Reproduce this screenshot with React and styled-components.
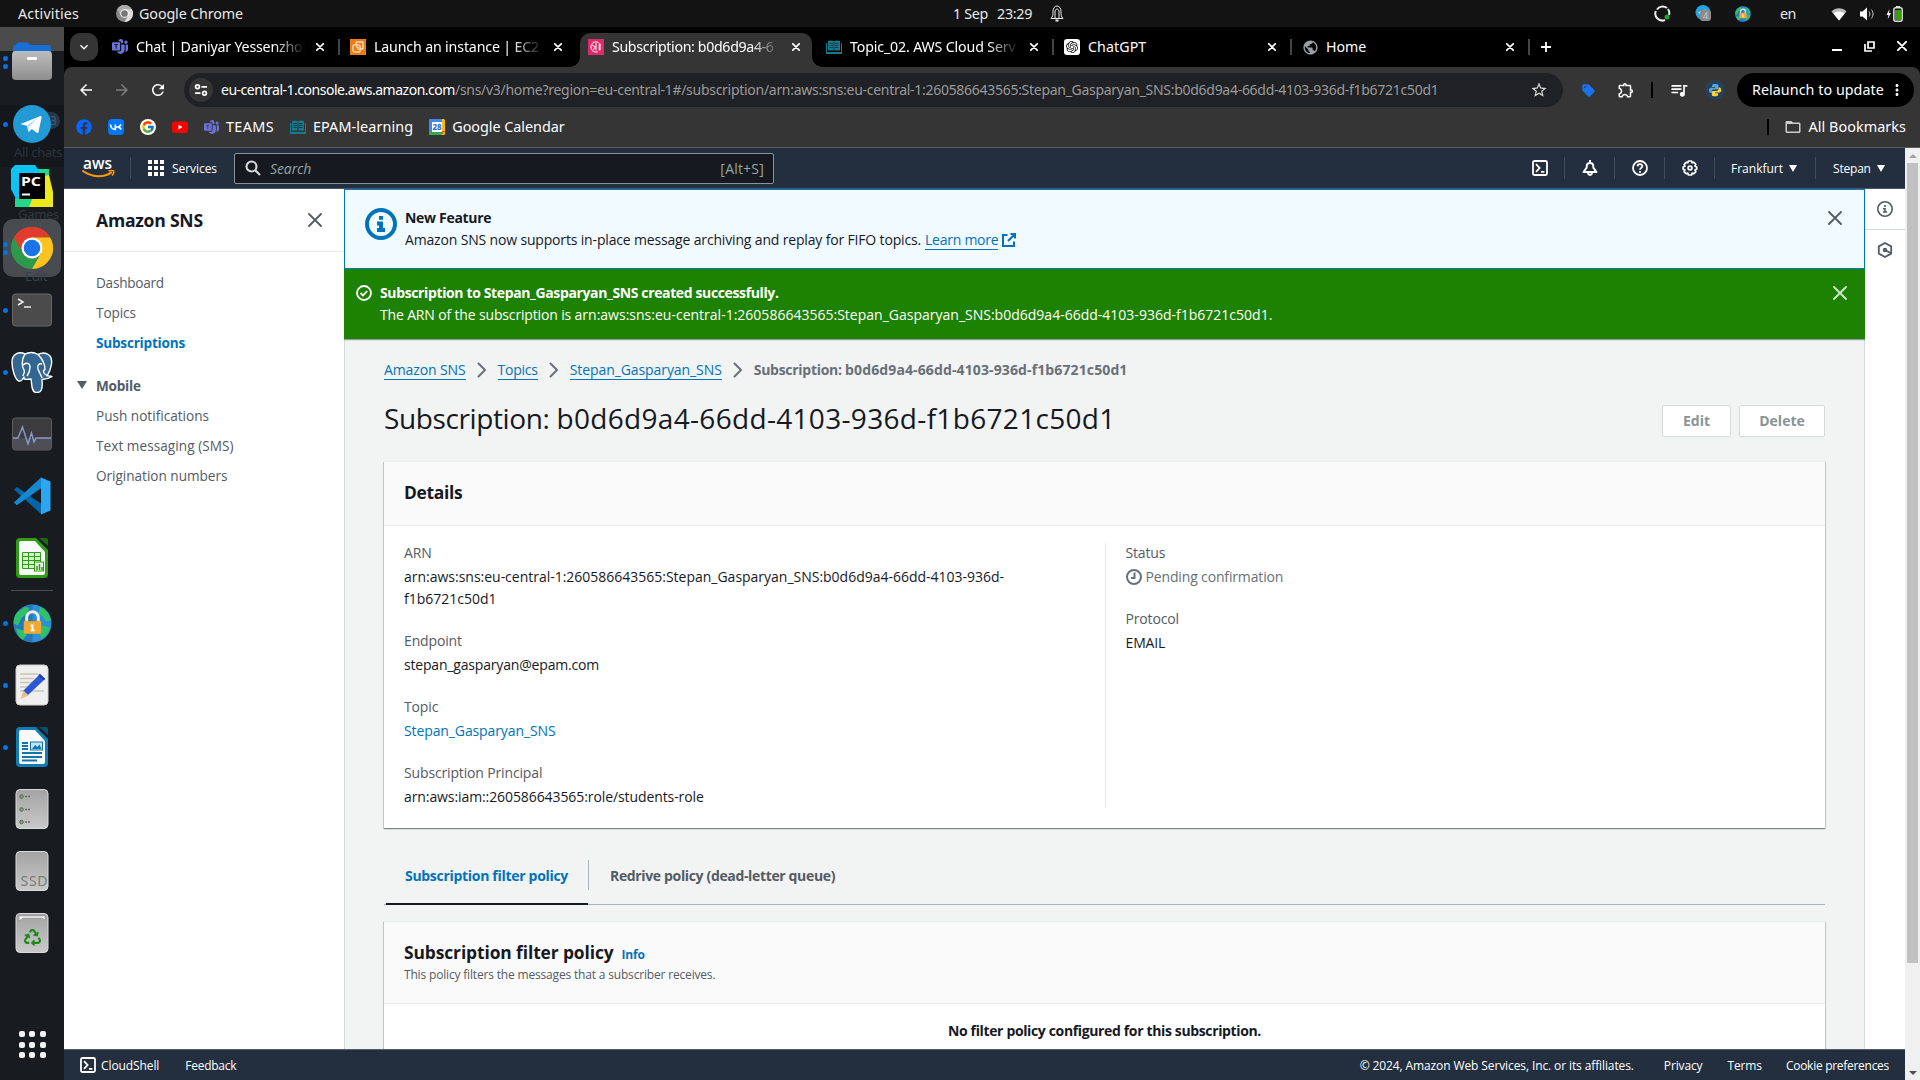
import React from "react";
import styled, { createGlobalStyle, css } from "styled-components";
import { FaRecycle, FaFacebook } from "react-icons/fa";
import { FcGoogle } from "react-icons/fc";
import { SiOpenai } from "react-icons/si";
import { BsMicrosoftTeams } from "react-icons/bs";
import {
  MdArrowBack, MdArrowForward, MdRefresh, MdStarBorder, MdOutlineExtension, MdQueueMusic,
  MdMoreVert, MdFolderOpen, MdPublic, MdSell, MdExpandMore,
} from "react-icons/md";

const Global = createGlobalStyle`
  * { box-sizing: border-box; }
  body { margin: 0; background: #000; overflow: hidden; }
  svg { display: block; flex: none; }
`;

const sysFont = `"Noto Sans", "Open Sans", sans-serif`;
const awsFont = `"Open Sans", "Noto Sans", sans-serif`;

const Desktop = styled.div`
  width: 1920px; height: 1080px; display: flex; flex-direction: column;
  overflow: hidden; font-family: ${sysFont}; background: #181b1f;
`;

/* ---------- generic text ---------- */
const Text = styled.span`
  white-space: nowrap;
  letter-spacing: ${(p) => p.$ls || 0}px;
  ${(p) => p.$size && css`font-size: ${p.$size}px;`}
  ${(p) => p.$color && css`color: ${p.$color};`}
  ${(p) => p.$bold && css`font-weight: 700;`}
`;
const ChromeText = styled(Text)`margin-top: -2px;`;

/* ---------- system bar ---------- */
const SystemBar = styled.header`
  height: 27px; flex: none; background: #131313; color: #e8e8e8; font-size: 14.3px;
  display: grid; grid-template-columns: 1fr auto 1fr; align-items: center;
  padding: 0 16px 0 18px;
`;
const BarGroup = styled.div`
  display: flex; align-items: center;
  ${(p) => p.$end && css`justify-content: flex-end;`}
  ${(p) => p.$shift && css`padding-left: ${p.$shift}px;`}
`;
const Gap = styled.div`width: ${(p) => p.$w}px; flex: none;`;

/* ---------- dock ---------- */
const Workspace = styled.div`flex: 1; display: flex; min-height: 0;`;
const Dock = styled.nav`
  width: 64px; flex: none; display: flex; flex-direction: column; padding-top: 4px;
  background: linear-gradient(#4b4b4b 0 24px, #191d21 24px 78px, #14171b 78px 140px, #181c20 140px);
`;
const DockItem = styled.div`
  height: 62px; width: 64px; flex: none; display: grid; place-items: center; position: relative;
  &::before {
    content: ""; position: absolute; inset: 2px 3px; border-radius: 10px; z-index: 0;
    background: ${(p) => (p.$active ? "#484b4f" : "transparent")};
  }
  & > svg { position: relative; z-index: 1; }
`;
const Dots = styled.div`
  position: absolute; left: 3px; top: 0; bottom: 0; z-index: 2; display: flex; flex-direction: column;
  justify-content: center; gap: 3px;
  & > i { width: 5px; height: 5px; border-radius: 50%; background: #0073e5; }
`;
const Ghost = styled.span`
  position: absolute; left: ${(p) => p.$x}px; bottom: -6px; font-size: 13px; line-height: 18px;
  color: ${(p) => p.$c || "#2a343d"}; white-space: nowrap; z-index: 1; letter-spacing: -0.3px;
`;
const GhostBadge = styled.span`
  position: absolute; left: 42px; top: 19px; width: 18px; height: 17px; border-radius: 9px;
  background: #25384a; color: #4b5c6b; font-size: 12px; line-height: 17px; padding-left: 8px; z-index: 0;
`;
const DockRule = styled.div`width: 42px; height: 1px; background: #4a4d50; margin: 1px auto;`;
const DockSpacer = styled.div`flex: 1;`;
const AppsButton = styled.div`
  display: grid; grid-template-columns: repeat(3, 6px); gap: 4.5px; justify-content: center; padding-bottom: 22px;
  & > i { width: 6px; height: 6px; border-radius: 2px; background: #f3f3f3; }
`;

/* ---------- browser chrome ---------- */
const Browser = styled.main`flex: 1; min-width: 0; display: flex; flex-direction: column; background: #353535;`;
const TabStrip = styled.div`
  height: 40px; flex: none; display: flex; align-items: flex-end; background: #000; color: #fff; padding: 0 13px 0 6px;
`;
const TabSearch = styled.div`
  width: 28px; height: 28px; border-radius: 10px; background: #353535; display: grid; place-items: center; margin: 0 4px 6px 0;
`;
const Tab = styled.div`
  width: 238px; height: 34px; flex: none; display: flex; align-items: center; position: relative;
  padding: 0 0 6px 10px; font-size: 14.2px;
  ${(p) => p.$active && css`
    &::after { content: ""; position: absolute; left: 2px; top: 0; width: 232px; height: 34px; background: #353535; border-radius: 10px 10px 0 0; z-index: 0; }
    &::before { content: ""; position: absolute; left: -8px; bottom: 0; width: 252px; height: 10px; z-index: 0;
      background: radial-gradient(circle at 0 0, transparent 9.5px, #353535 10px) left / 10px 10px no-repeat,
        radial-gradient(circle at 100% 0, transparent 9.5px, #353535 10px) right / 10px 10px no-repeat; }
    & > * { z-index: 1; position: relative; }
  `}
`;
const TabIcon = styled.div`width: 16px; height: 16px; margin-right: 8px; display: grid; place-items: center; flex: none;`;
const TabTitle = styled.div`
  width: 170px; flex: none; overflow: hidden; white-space: nowrap; line-height: 22px; letter-spacing: ${(p) => p.$ls ?? -0.2}px;
  ${(p) => p.$fade && css`mask-image: linear-gradient(90deg, #000 138px, transparent 169px);`}
`;
const TabClose = styled.div`width: 16px; flex: none; margin-left: 6px; display: grid; place-items: center;`;
const TabRule = styled.i`width: 2px; height: 16px; background: #454545; margin-left: 10px; flex: none;`;
const NewTab = styled.div`height: 40px; display: flex; align-items: center; padding: 0 0 1px 11px;`;
const WindowButtons = styled.div`margin-left: auto; height: 40px; display: flex; align-items: center; gap: 22px; padding-bottom: 2px;`;

const ToolbarTop = styled.div`background: #000; flex: none;`;
const ToolbarRow = styled.div`
  height: 46px; display: flex; align-items: center; padding: 0 6px 0 12px; color: #fff; background: #353535;
  border-radius: 8px 8px 0 0;
`;
const NavButton = styled.div`width: 36px; height: 34px; display: flex; align-items: center; padding-left: 1px; color: ${(p) => (p.$off ? "#7d7d7d" : "#fff")};`;
const UrlBar = styled.div`
  width: 1379px; height: 34px; border-radius: 17px; background: #202124; display: flex; align-items: center;
  padding: 0 15px 0 5px; font-size: 14px;
`;
const TuneButton = styled.div`width: 24px; height: 24px; border-radius: 50%; background: #353535; display: grid; place-items: center; margin-right: 8px;`;
const Push = styled.div`margin-left: auto;`;
const BarRule = styled.i`width: 2px; height: 16px; background: #000; flex: none;`;
const Relaunch = styled.div`
  width: 177px; height: 34px; border-radius: 17px; background: #000; display: flex; align-items: center; padding-left: 15px;
  font-size: 14.3px; margin-left: auto;
`;
const BookmarkBar = styled.div`
  height: 34px; flex: none; display: flex; align-items: center; padding: 0 14px 6px 12px; color: #fff; font-size: 14.4px;
`;
const Bookmark = styled.div`display: flex; align-items: center; gap: 7px; margin-right: 16px;`;

/* ---------- page ---------- */
const Page = styled.div`flex: 1; min-height: 0; display: flex; border-top: 1px solid #5c5c5c; font-family: ${awsFont};`;
const PageMain = styled.div`flex: 1; min-width: 0; display: flex; flex-direction: column;`;
const Scrollbar = styled.div`
  width: 15px; flex: none; background: #f0f0f0; display: flex; flex-direction: column; align-items: center; padding: 6px 0 5px;
`;
const Thumb = styled.div`width: 11px; height: 800px; background: #c1c1c1; margin: 5px 0 auto;`;

const AwsHeader = styled.div`
  height: 41px; flex: none; background: #232f3e; border-bottom: 1px solid #4b5665; display: flex; align-items: center;
  padding-left: 18px; color: #fff; font-size: 12px;
`;
const HeaderRule = styled.i`width: 1px; height: 22px; background: #414d5c; flex: none; margin: ${(p) => p.$m || "0"};`;
const HeaderIcon = styled.div`width: 49px; display: grid; place-items: center;`;
const HeaderMenu = styled.div`display: flex; align-items: center; gap: 6px; width: ${(p) => p.$w}px; padding-left: ${(p) => p.$pl}px;`;
const SearchBox = styled.div`
  width: 540px; height: 31px; border: 1px solid #879596; border-radius: 2px; background: #161920; display: flex; align-items: center;
  padding: 0 9px 0 10px; color: #95a5a6; font-size: 14px; margin-left: 17px;
`;
const Caret = styled.i`
  width: 0; height: 0; flex: none; border: ${(p) => p.$s || 4}px solid transparent; color: ${(p) => p.$c || "inherit"};
  ${(p) => (p.$up
    ? css`border-top: 0; border-bottom: ${p.$h || 7}px solid currentColor;`
    : css`border-bottom: 0; border-top: ${p.$h || 7}px solid currentColor;`)}
`;

const PageBody = styled.div`flex: 1; min-height: 0; display: flex; background: #f2f3f3; overflow: hidden;`;
const SideNav = styled.aside`width: 280px; flex: none; background: #fff; color: #545b64; font-size: 13.6px;`;
const SideHead = styled.div`
  height: 63px; border-bottom: 1px solid #eaeded; display: flex; align-items: center; justify-content: space-between;
  padding: 0 22px 0 32px; color: #16191f;
`;
const SideList = styled.ul`list-style: none; margin: 0; padding: ${(p) => p.$pad}; line-height: 30px;`;
const SideGroup = styled.div`
  display: flex; align-items: center; gap: 9px; margin: 16px 0 5px 13px; height: 22px; font-weight: 700; letter-spacing: -0.25px;
`;

const Content = styled.section`flex: 1; min-width: 0; border-right: 1px solid #d5dbdb; border-left: 1px solid #d5dbdb;`;
const InfoFlash = styled.div`
  height: 80px; margin: 0 -1px; border: 1px solid #0073bb; background: #f1faff; display: flex; padding: 17px 22px 0 20px; color: #16191f;
`;
const SuccessFlash = styled.div`
  height: 70px; margin: 0 -1px; background: #1d8102; color: #fff; display: flex; padding: 13px 18px 0 12px;
  box-shadow: 0 1px 1px rgba(0, 28, 36, 0.3), 1px 1px 1px rgba(0, 28, 36, 0.15);
`;
const Slot = styled.div`padding-top: ${(p) => p.$t}px;`;
const Lines = styled.div`display: flex; flex-direction: column; font-size: 14px; line-height: 22px; flex: 1; margin-left: ${(p) => p.$ml}px;`;
const Link = styled(Text)`color: #0073bb; ${(p) => p.$u && css`border-bottom: 1px solid #0073bb; line-height: 18px;`}`;
const Inline = styled.div`display: flex; align-items: ${(p) => p.$align || "center"}; gap: ${(p) => p.$gap || 0}px; ${(p) => p.$h && css`height: ${p.$h}px;`}`;

const Breadcrumbs = styled.div`
  display: flex; align-items: center; height: 20px; margin: 21px 39px 0; font-size: 14px; line-height: 18px; gap: 9px; color: #687078;
`;
const TitleRow = styled.div`display: flex; justify-content: space-between; align-items: center; height: 40px; margin: 18px 39px 0; color: #16191f;`;
const ButtonRow = styled.div`display: flex; gap: 8px; padding-top: 6px;`;
const Button = styled.div`
  height: 32px; width: ${(p) => p.$w}px; background: #fff; border: 1px solid #d5dbdb; border-radius: 2px; color: #879596;
  font-size: 14px; line-height: 30px; font-weight: 700; text-align: center;
`;
const Card = styled.div`
  background: #fff; margin: ${(p) => p.$m}; border-top: 1px solid #eaeded; color: #16191f;
  box-shadow: 0 1px 1px 0 rgba(0, 28, 36, 0.3), 1px 1px 1px 0 rgba(0, 28, 36, 0.15), -1px 1px 1px 0 rgba(0, 28, 36, 0.15);
`;
const CardHead = styled.div`
  height: ${(p) => p.$h}px; background: #fafafa; border-bottom: 1px solid #eaeded; padding: 18px 20px 0; line-height: 24px;
`;
const Desc = styled.div`font-size: 12px; line-height: 18px; color: #545b64; margin-top: 1px; letter-spacing: -0.175px;`;
const Columns = styled.div`display: grid; grid-template-columns: 1fr 1fr; padding: 16px 20px 20px 0; height: 302px;`;
const Column = styled.div`
  display: flex; flex-direction: column; gap: 20px; padding-left: 20px; font-size: 14px; line-height: 22px; height: 266px;
  ${(p) => p.$divider && css`border-left: 1px solid #eaeded; margin-left: 10px;`}
`;
const Field = styled.div`display: flex; flex-direction: column; & > :first-child { color: #545b64; margin-bottom: 2px; }`;
const Tabs = styled.div`height: 45px; margin: 32px 39px 0 39px; border-bottom: 1px solid #aab7b8; display: flex; font-size: 14px; font-weight: 700;`;
const TabLink = styled.div`
  height: 45px; line-height: 32px; padding: 0 20px; color: #545b64; margin-left: 1px;
  ${(p) => p.$on && css`color: #0073bb; border-bottom: 2px solid #16191f; width: 202px; padding: 0 19px; margin-left: 2px; white-space: nowrap;`}
`;
const TabDivider = styled.i`width: 1px; height: 30px; background: #aab7b8;`;
const EmptyRow = styled.div`height: 60px; padding-top: 16px; text-align: center; font-size: 14px; line-height: 22px;`;
const HelpRail = styled.aside`width: 40px; flex: none; background: #fff; color: #545b64; display: flex; flex-direction: column;`;
const RailItem = styled.div`height: ${(p) => p.$h}px; display: grid; place-items: center; ${(p) => p.$line && css`border-bottom: 1px solid #d5dbdb;`}`;
const Footer = styled.footer`
  height: 31px; flex: none; background: #232f3e; border-top: 1px solid #545f6e; color: #fff; font-size: 12px; display: flex; align-items: center;
  padding: 0 16px; justify-content: space-between;
`;

/* ---------- small icons ---------- */
const X = ({ s = 14, w = 2, c = "currentColor" }) => (
  <svg width={s} height={s} viewBox="0 0 14 14" stroke={c} strokeWidth={w} strokeLinecap="round"><path d="M1 1l12 12M13 1L1 13" /></svg>
);
const InfoIcon = ({ s = 32, w = 2, c = "#0073bb" }) => (
  <svg width={s} height={s} viewBox="0 0 16 16" fill="none" stroke={c} strokeWidth={w}>
    <circle cx="8" cy="8" r={8 - w / 2} /><path d="M8 4v1.9M6 7.8h2v3.3M6 11h4" />
  </svg>
);
const CloudShellIcon = () => (
  <svg width="16" height="16" viewBox="0 0 16 16" fill="none" stroke="#fff" strokeWidth="1.8"><rect x="1" y="1" width="14" height="14" rx="1.5" /><path d="M4 4.2L7.6 8 4 11.8M9 11.8h3.4" /></svg>
);
const BellIcon = () => (
  <svg width="16" height="16" viewBox="0 0 16 16" fill="none" stroke="#fff" strokeWidth="1.9" strokeLinejoin="round"><path d="M8 0v2.500M1.500 12L4.700 7.600V6.300C4.700 4.400 6 3 8 3s3.300 1.400 3.300 3.300v1.300l3.200 4.400zM6 12.300c0 3.500 4 3.500 4 0" /></svg>
);
const HelpIcon = () => (
  <svg width="16" height="16" viewBox="0 0 16 16" fill="none" stroke="#fff" strokeWidth="1.8"><circle cx="8" cy="8" r="7" /><path d="M5.6 6.4C5.7 3.4 10.3 3.5 10.3 6.2 10.3 7.9 8 7.9 8 9.8M8 11v1.7" /></svg>
);
const GearIcon = () => (
  <svg width="16" height="16" viewBox="0 0 16 16" fill="none" stroke="#fff" strokeWidth="1.7" strokeLinejoin="round">
    <path d="M6.4 1h3.2l.5 1.7 1.8-.4 1.8 2-.8 1.7 1.8.9v2.3l-1.7.9.8 1.8-2 1.8-1.7-.6-.5 1.9H6.4l-.6-1.9-1.7.6-2-1.8.8-1.8-1.7-.9V6.9L3 6l-.8-1.7 1.9-2 1.7.4z" /><circle cx="8" cy="8" r="1.9" />
  </svg>
);
const Chevron = () => (
  <svg width="14" height="16" viewBox="0 0 14 16" fill="none" stroke="#687078" strokeWidth="2" strokeLinecap="round" strokeLinejoin="round"><path d="M3.500 1.500L10 8l-6.500 6.500" /></svg>
);
const CheckIcon = () => (
  <svg width="16" height="16" viewBox="0 0 16 16" fill="none" stroke="#fff" strokeWidth="1.8"><circle cx="8" cy="8" r="7" /><path d="M4.500 8l2.500 2.400 4.200-4.400" /></svg>
);
const ClockIcon = () => (
  <svg width="16" height="16" viewBox="0 0 16 16" fill="none" stroke="#687078" strokeWidth="2"><circle cx="8" cy="8" r="7" /><path d="M8.500 3.500V9H5" /></svg>
);
const ExternalIcon = () => (
  <svg width="14" height="14" viewBox="0 0 14 14" fill="none" stroke="#0073bb" strokeWidth="2"><path d="M8.500 1H13v4.500M13 1L6 8M5.500 2H1v11h11V8.500" /></svg>
);
const HexIcon = () => (
  <svg width="16" height="16" viewBox="0 0 16 16" fill="none" stroke="#545b64" strokeWidth="1.8" strokeLinejoin="round"><path d="M8 1l6.200 3.400v7.200L8 15l-6.200-3.400V4.400z" /><circle cx="8" cy="8" r="1.300" fill="#545b64" /><path d="M8.500 8.200l5.500 3" /></svg>
);
const SearchIcon = () => (
  <svg width="16" height="16" viewBox="0 0 16 16" fill="none" stroke="#d5dbdb" strokeWidth="2.100"><circle cx="6.500" cy="6.500" r="5" /><path d="M10 10l5 5" /></svg>
);
const GridIcon = () => (
  <svg width="16" height="16" viewBox="0 0 16 16" fill="#fff">
    {[0, 6, 12].flatMap((x) => [0, 6, 12].map((y) => <rect key={`${x}-${y}`} x={x} y={y} width="4" height="4" />))}
  </svg>
);
const TuneIcon = () => (
  <svg width="14" height="14" viewBox="0 0 14 14" fill="none" stroke="#fff" strokeWidth="1.700"><circle cx="3.500" cy="3.800" r="1.900" /><path d="M7.500 3.800H13M1 10.200h5.500" /><circle cx="10.500" cy="10.200" r="1.900" /></svg>
);
const AwsLogo = () => (
  <svg width="34" height="32" viewBox="0 -5 34 32">
    <text x="1" y="12" fontFamily="Open Sans, sans-serif" fontSize="16" fontWeight="600" fill="#fff" textLength="29" lengthAdjust="spacingAndGlyphs">aws</text>
    <path d="M1 14c9 6.600 21 6.600 28 1.600" fill="none" stroke="#f90" strokeWidth="2" strokeLinecap="round" />
    <path d="M26.500 14c2.500-.6 4.700-.5 5.200 0 .3.700-.3 3-1.700 4.600" fill="none" stroke="#f90" strokeWidth="1.500" />
  </svg>
);
const BookIcon = () => (
  <svg width="16" height="16" viewBox="0 0 16 16"><path d="M2 2c2-.8 4-.7 6 .3 2-1 4-1.100 6-.3v9.500H2z" fill="#157a8c" /><path d="M0 13h16v2H0zM0 4h1v9H0zM15 4h1v9h-1z" fill="#157a8c" /><path d="M3.500 4.500h3.500M3.500 6.500h3.500M3.500 8.500h3.500M9 4.500h3.500M9 6.500h3.500M9 8.500h3.500M8 3v9" stroke="#0b3c48" /></svg>
);
const Ec2Icon = () => (
  <svg width="16" height="16" viewBox="0 0 16 16" fill="none" stroke="#fff"><rect width="16" height="16" fill="#ec7d12" stroke="none" /><rect x="3" y="6" width="7" height="7" rx=".5" /><path d="M6 6V3h7v7h-3M6 8h2v3" /></svg>
);
const SnsIcon = () => (
  <svg width="16" height="16" viewBox="0 0 16 16" fill="none" stroke="#fff"><rect width="16" height="16" fill="#e02a6b" stroke="none" /><path d="M10.500 3.500C6 1.500 3 4.500 3 8s3 6 7 4.700M4 6l3.500 2L5 11M8 4v7.500M10.500 6h2.500M10.500 8h2.500M10.500 10h2.500M11.700 4v7.500" /></svg>
);
const VkIcon = () => (
  <svg width="16" height="16" viewBox="0 0 16 16"><rect width="16" height="16" rx="4" fill="#07f" /><path d="M2.500 5.500c.3 3 1.800 5 4.800 5v-5M13 5.500c-.8 1.500-2 2.500-3.200 2.600 1.500.2 2.700 1.200 3.400 2.400M7.600 8h2" fill="none" stroke="#fff" strokeWidth="1.600" /></svg>
);
const YtIcon = () => (
  <svg width="16" height="16" viewBox="0 0 16 16"><rect y="2.500" width="16" height="11.500" rx="3" fill="#f00" /><path d="M6.500 5.800v4.600l4-2.300z" fill="#fff" /></svg>
);
const CalIcon = () => (
  <svg width="16" height="16" viewBox="0 0 16 16"><rect width="16" height="16" rx="1.500" fill="#fbbc04" /><path d="M1.500 0H13v4H0V1.500z" fill="#4285f4" /><path d="M0 3h4v9H0z" fill="#4285f4" /><path d="M0 12h12v4H1.500L0 14.500z" fill="#34a853" /><path d="M12 12h4l-4 4z" fill="#ea4335" /><rect x="3" y="3" width="10" height="10" fill="#fff" /><text x="8" y="11" fontSize="8" fontWeight="700" textAnchor="middle" fill="#1967d2" fontFamily="Noto Sans, sans-serif">28</text></svg>
);
const GoogleDot = () => (
  <svg width="16" height="16" viewBox="0 0 16 16"><circle cx="8" cy="8" r="8" fill="#fff" /><FcGoogle x="1" y="1" size={14} /></svg>
);
const PythonBadge = () => (
  <svg width="20" height="20" viewBox="0 0 20 20"><circle cx="10" cy="10" r="10" fill="#27405a" /><path d="M10 4c-3 0-3 .9-3 3h3.200v.7H6C4.500 7.700 4 9 4 10.300c0 1.500.6 2.600 1.700 2.600h1.200V11c0-1 .8-1.600 1.700-1.600H12c.9 0 1.400-.7 1.400-1.500V5.500C13.400 4.300 12 4 10 4z" fill="#54a3dc" /><path d="M10.200 16.300c3 0 3-.9 3-3H10v-.7h4.200c1.500 0 2-1.300 2-2.600 0-1.500-.6-2.600-1.700-2.600h-1v1.900c0 1-.9 1.600-1.700 1.600H8.300c-.9 0-1.500.7-1.500 1.500v2.300c0 1.300 1.400 1.600 3.400 1.600z" fill="#ffd43b" /></svg>
);

/* ---------- tray icons ---------- */
const Tray = () => (
  <>
    <svg width="17" height="17" viewBox="0 0 17 17" fill="none"><path d="M13 3A7 7 0 0 0 3 4.500M1.800 6A7 7 0 0 0 11 15M15 10a7 7 0 0 0-1-6" stroke="#eee" strokeWidth="2" /><circle cx="13" cy="12" r="2.500" fill="#26a32a" /></svg>
    <Gap $w={24} />
    <svg width="17" height="17" viewBox="0 0 17 17"><circle cx="8" cy="7.500" r="7.500" fill="#2aa1dc" /><path d="M3 7.500l8-3-1.500 7z" fill="#fff" /><rect x="5" y="5" width="11" height="11" rx="3" fill="#8b8b8b" /><text x="10.500" y="14" fontSize="9" textAnchor="middle" fill="#ccc" fontFamily="Noto Sans, sans-serif">4</text></svg>
    <Gap $w={23} />
    <svg width="16" height="16" viewBox="0 0 40 40"><GlobeArt /></svg>
    <Gap $w={29} />
    <Text $ls={-0.4}>en</Text>
    <Gap $w={35} />
    <svg width="16" height="14" viewBox="0 0 16 14"><path d="M8 13.500L.5 4.500C4.500.2 11.500.2 15.500 4.500z" fill="#bbb" /><path d="M8 13.500L2.500 6.500C5.500 3.800 10.500 3.800 13.500 6.500z" fill="#fff" /></svg>
    <Gap $w={12} />
    <svg width="16" height="16" viewBox="0 0 16 16" fill="none"><path d="M1 5.500h2.500L8 1.500v13L3.500 10.500H1z" fill="#fff" /><path d="M10 5.500c1.200 1.500 1.200 3.500 0 5M12.300 3.500c2.300 2.800 2.300 6.200 0 9" stroke="#ccc" /></svg>
    <Gap $w={11} />
    <svg width="18" height="18" viewBox="0 0 18 18"><path d="M3.500 4L.5 10h2l-.7 4L5 8H3z" fill="#fff" /><rect x="7.800" y="2.800" width="8.400" height="13.400" rx="2" fill="none" stroke="#ddd" strokeWidth="1.500" /><path d="M10 1h4v1.500h-4z" fill="#ddd" /><rect x="9" y="5" width="6" height="10" fill="#3f9a0a" /></svg>
  </>
);

/* ---------- dock art ---------- */
function GlobeArt() {
  return (
    <>
      <circle cx="20" cy="20" r="19.500" fill="#2f8fd6" />
      <path d="M20 .5A19.500 19.500 0 0 0 20 39.500z" fill="#2678bd" />
      <path d="M4 9l8-6 5 1-3 6-5 4-4 8-4-2c-.5-4 .5-8 3-11zM3 25l8 2 3 5-4 5c-4-3-6-7-7-12zM28 3c6 2 10 8 11 14l-5 1-4-6-4-2zM30 22l8 2c-1 5-4 9-9 12l-2-6z" fill="#2fc06a" />
      <path d="M14 19v-5a6 6 0 0 1 12 0v5" fill="none" stroke="#e9edf0" strokeWidth="3" />
      <rect x="11" y="17.500" width="18" height="13" rx="1.500" fill="#f0a830" />
      <path d="M18 21h3v5h1v2h-4v-2h1v-3h-1z" fill="#fff" />
    </>
  );
}
const FilesArt = () => (
  <svg width="40" height="40" viewBox="0 0 40 40"><defs><linearGradient id="fg" x1="0" y1="0" x2="0" y2="1"><stop offset="0" stopColor="#bdbdbd" /><stop offset="1" stopColor="#8e8e8e" /></linearGradient></defs>
    <path d="M4 3a2.500 2.500 0 0 1 2.500-2.500h9L18 3h18a3 3 0 0 1 3 3v10H1V6a3 3 0 0 1 3-3z" fill="#1a6fd6" /><rect y="9" width="40" height="29" rx="4" fill="url(#fg)" /><rect x="15" y="15" width="10" height="3" rx="1" fill="#fff" /></svg>
);
const TelegramArt = () => (
  <svg width="38" height="38" viewBox="0 0 38 38"><circle cx="19" cy="19" r="19" fill="#229ad6" /><path d="M7.500 19L27 11.200c1-.4 1.700.2 1.500 1.500L25.500 27c-.3 1-1 1.200-1.800.7l-4.900-3.600-2.500 2.500c-.6.5-1 .2-1.100-.5l-1.300-5.400-5.700-1.500c-.8-.2-.8-.6-.7-.2z" fill="#fff" /><path d="M14 20l11-6.800-8.700 8.300-.7 4.300z" fill="#bcdcf0" /></svg>
);
const PycharmArt = () => (
  <svg width="42" height="42" viewBox="0 0 42 42"><path d="M4 34l20-30 14 0v18L26 42H4z" fill="#21d789" /><path d="M30 12l8-2 4 17v15H18z" fill="#eeea1a" /><path d="M0 4l4-4h20l5 7-20 27H5L0 24z" fill="#0cc3f4" /><rect x="8" y="8" width="26" height="26" fill="#000" /><text x="10" y="21" fontSize="13" fontWeight="700" fill="#fff" fontFamily="Noto Sans, sans-serif" textLength="20" lengthAdjust="spacingAndGlyphs">PC</text><path d="M11 29.500h8" stroke="#fff" strokeWidth="2" /></svg>
);
const ChromeArt = ({ s = 42, mono }) => {
  const [r, y, g, b] = mono ? ["#aaa", "#ddd", "#888", "#777"] : ["#e33b2e", "#fcc31e", "#2d9a4b", "#1a73e8"];
  return (
    <svg width={s} height={s} viewBox="0 0 42 42"><circle cx="21" cy="21" r="21" fill={g} />
      <path d="M2.800 10.500A21 21 0 0 1 39.200 10.500L21 10.500 11.900 26.200z" fill={r} />
      <path d="M39.200 10.500A21 21 0 0 1 21 42L30 26.200 21 10.500z" fill={y} />
      <circle cx="21" cy="21" r="10.500" fill="#fff" /><circle cx="21" cy="21" r="8.300" fill={b} /></svg>
  );
};
const TerminalArt = () => (
  <svg width="40" height="34" viewBox="0 0 40 34"><rect x=".5" y="1" width="39" height="32" rx="3" fill="#4b4b4b" stroke="#666" /><path d="M6 6l5 3-5 3M12 14h7" fill="none" stroke="#eee" strokeWidth="1.500" /></svg>
);
const PostgresArt = () => (
  <svg width="42" height="42" viewBox="0 0 42 42" fill="#336791" stroke="#fff" strokeWidth="1.400" strokeLinejoin="round">
    <path d="M14 3C8 0 1 3 1 11c0 7 3 18 7 19 2 .5 4-2 5-4 0 2-1 3 7 2 1 4 0 13 5 13.500 5 .5 7-3 6-13 4 0 7-1 10-3-1-.8-3-.5-5-.6C40 19 43 8 38 4c-4-3-9-1.500-11-.5C23 1 18 1 14 3z" />
    <path d="M14 3c-4 6-3 13-1 16 1.500 3-1 4-1 6M27 3.500c5 5 7 11 7 15-2 1-3 3 2 6M12 14c3-3 7-2 7 2 0 5-1 6-3 9M31 13c-3-1-5 1-4 5 1 3 3 6 4 9" fill="none" />
  </svg>
);
const MonitorArt = () => (
  <svg width="40" height="34" viewBox="0 0 40 34"><rect x=".5" y="1" width="39" height="32" rx="3" fill="#3c3c3f" stroke="#5d5d60" /><path d="M1 21h38v9a3 3 0 0 1-3 3H4a3 3 0 0 1-3-3z" fill="#4d4e56" /><path d="M1 21h5l4.500-11L16 27l3.500-11 2.500 9 2-4h15" fill="none" stroke="#8a9ad0" strokeWidth="1.400" /></svg>
);
const VscodeArt = () => (
  <svg width="38" height="38" viewBox="0 0 38 38"><path d="M1 12.500L4 10l26 18-2 9z" fill="#0065a9" /><path d="M1 25.500L4 28 30 10 28 1z" fill="#007acc" /><path d="M28 .5l9.500 4v29L28 37.500z" fill="#2da6f0" /><path d="M28 .5v10L4 28l-3-2.500z" fill="#1787cf" /></svg>
);
const DocArt = ({ kind }) => {
  const c = kind === "calc" ? "#2e9c15" : "#0f7cb5";
  const d = kind === "calc" ? "#1c6a0d" : "#0b4f74";
  return (
    <svg width="34" height="42" viewBox="0 0 34 42"><rect x="1" y="1" width="32" height="40" rx="4" fill={c} /><path d="M20 0h13v13z" fill="#181c20" /><path d="M24 1h7a2 2 0 0 1 2 2v6z" fill={d} /><path d="M4 6a2 2 0 0 1 2-2h14l10 11v21a2 2 0 0 1-2 2H6a2 2 0 0 1-2-2z" fill="#fafafa" />
      {kind === "calc" ? (
        <><path d="M7.500 15.500h18v16h-18zM7.500 19.500h18M7.500 23.500h18M7.500 27.500h18M13.500 15.500v16M19.500 15.500v16" fill="#d7f0cf" stroke={c} /><rect x="19.500" y="25" width="9" height="9" fill="#eaf8e4" stroke={c} /><path d="M22 33v-4M24.500 33v-6M27 33v-3" stroke={c} strokeWidth="1.500" /></>
      ) : (
        <><path d="M7 17h6M7 20h6M7 23h6M7 27h20M7 31h20M7 34.500h15" stroke="#1276ad" strokeWidth="1.800" /><rect x="15.500" y="16" width="12" height="8" fill="#bfe3f6" stroke="#1276ad" /><path d="M17 23l3-4 2.500 2 2-2.500 2 4.500z" fill="#1276ad" /></>
      )}
    </svg>
  );
};
const EditorArt = () => (
  <svg width="34" height="42" viewBox="0 0 34 42"><rect x="1" y="1" width="32" height="40" rx="4" fill="#efefef" stroke="#cfcfcf" /><path d="M5 10h18M5 14.500h14M5 18.500h14M5 23h8M5 27h24" stroke="#c9c6b5" strokeWidth="1.500" /><path d="M22 13l3-3 5 5-17 16-5-4z" fill="#2c58d8" /><path d="M8.500 26.500l5 5-8 3.500z" fill="#f0b98c" /><path d="M24 10.500l5.500 5" stroke="#1c3da8" strokeWidth="2" /></svg>
);
const DriveArt = ({ kind }) => (
  <svg width="34" height="42" viewBox="0 0 34 42"><defs><linearGradient id={`dg-${kind}`} x1="0" y1="0" x2="0" y2="1"><stop offset="0" stopColor="#a3a3a3" /><stop offset="1" stopColor="#c9c9c9" /></linearGradient></defs>
    <rect x="1" y="1.500" width="32" height="39" rx="4" fill={`url(#dg-${kind})`} stroke="#d9d9d9" />
    {kind === "disk" && [8.500, 21.500, 34].map((y) => <g key={y}><circle cx="6.500" cy={y} r="1.800" fill="#78a84c" stroke="#666" /><path d={`M10 ${y}h2M13 ${y}h2`} stroke="#666" strokeWidth="1.500" /></g>)}
    {kind === "ssd" && <text x="5.500" y="36" fontSize="14" fill="#7c7c7c" fontFamily="Noto Sans, sans-serif" textLength="27">SSD</text>}
    {kind === "trash" && <><path d="M4 4h26v4l-3-2H8L4 9z" fill="#fff" stroke="#888" strokeWidth=".6" /><FaRecycle x="9" y="17" size={17} color="#1f8a1a" /></>}
  </svg>
);

const dockTop = [
  { id: "files", art: <FilesArt />, dots: 2 },
  { id: "telegram", art: <TelegramArt />, dots: 1, extra: <><GhostBadge>3</GhostBadge><Ghost $x={14}>All chats</Ghost></> },
  { id: "pycharm", art: <PycharmArt />, dots: 0, extra: <Ghost $x={18} $c="#30383f">Games</Ghost> },
  { id: "chrome", art: <ChromeArt />, dots: 2, active: true, extra: <Ghost $x={25} $c="#3a4148">Edit</Ghost> },
  { id: "terminal", art: <TerminalArt />, dots: 1 },
  { id: "postgres", art: <PostgresArt />, dots: 1 },
  { id: "monitor", art: <MonitorArt />, dots: 0 },
  { id: "vscode", art: <VscodeArt />, dots: 0 },
  { id: "calc", art: <DocArt kind="calc" />, dots: 0 },
];
const dockBottom = [
  { id: "vpn", art: <svg width="39" height="39" viewBox="0 0 40 40"><GlobeArt /></svg>, dots: 1 },
  { id: "editor", art: <EditorArt />, dots: 1 },
  { id: "writer", art: <DocArt kind="writer" />, dots: 1 },
  { id: "disk", art: <DriveArt kind="disk" />, dots: 0 },
  { id: "ssd", art: <DriveArt kind="ssd" />, dots: 0 },
  { id: "trash", art: <DriveArt kind="trash" />, dots: 0 },
];
const renderDock = ({ id, art, dots, active, extra }) => (
  <DockItem key={id} $active={active}>
    {art}{extra}
    <Dots>{Array.from({ length: dots }, (_, i) => <i key={i} />)}</Dots>
  </DockItem>
);

const tabs = [
  { title: "Chat | Daniyar Yessenzhol", icon: <BsMicrosoftTeams size={16} color="#6a74d8" />, rule: true, fade: true },
  { title: "Launch an instance | EC2", icon: <Ec2Icon />, fade: true, ls: -0.15 },
  { title: "Subscription: b0d6d9a4-6", icon: <SnsIcon />, active: true, fade: true, ls: -0.35 },
  { title: "Topic_02. AWS Cloud Serv", icon: <BookIcon />, rule: true, fade: true, ls: -0.15 },
  { title: "ChatGPT", icon: <svg width="16" height="16" viewBox="0 0 16 16"><rect width="16" height="16" rx="3" fill="#fff" /><SiOpenai x="2" y="2" size={12} color="#111" /></svg>, rule: true, ls: 0.1 },
  { title: "Home", icon: <MdPublic size={17} color="#9aa0a6" />, rule: true, ls: 0 },
];

const Fields = ({ items }) => items.map(([label, value]) => <Field key={label}><Text $ls={-0.15}>{label}</Text>{value}</Field>);

export default function App() {
  return (
    <Desktop>
      <Global />
      <SystemBar>
        <BarGroup>
          <Text $ls={0.15}>Activities</Text><Gap $w={37} /><ChromeArt s={17} mono /><Gap $w={6} /><Text $ls={-0.12}>Google Chrome</Text>
        </BarGroup>
        <BarGroup $shift={95}>
          <Text $ls={-0.3}>1 Sep</Text><Gap $w={9} /><Text $ls={-0.3}>23:29</Text><Gap $w={18} />
          <svg width="14" height="17" viewBox="0 0 14 17" fill="none" stroke="#eee"><path d="M1 13.500c2-2 2-4 2-7C3 3.500 4.500 1 7 1s4 2.500 4 5.500c0 3 0 5 2 7zM5 13.500V7c0-4 4-4 4 0v6.500" /><path d="M5.500 15.500h3" strokeWidth="2" /></svg>
        </BarGroup>
        <BarGroup $end><Tray /></BarGroup>
      </SystemBar>
      <Workspace>
        <Dock>
          {dockTop.map(renderDock)}
          <DockRule />
          {dockBottom.map(renderDock)}
          <DockSpacer />
          <AppsButton>{Array.from({ length: 9 }, (_, i) => <i key={i} />)}</AppsButton>
        </Dock>
        <Browser>
          <TabStrip>
            <TabSearch><MdExpandMore size={16} /></TabSearch>
            {tabs.map((t) => (
              <Tab key={t.title} $active={t.active}>
                <TabIcon>{t.icon}</TabIcon>
                <TabTitle $fade={t.fade} $ls={t.ls}>{t.title}</TabTitle>
                <TabClose><X s={8} w={2.800} /></TabClose>
                {t.rule && <TabRule />}
              </Tab>
            ))}
            <NewTab><svg width="10" height="10" viewBox="0 0 10 10" stroke="#fff" strokeWidth="1.800"><path d="M5 0v10M0 5h10" /></svg></NewTab>
            <WindowButtons>
              <svg width="10" height="12" viewBox="0 0 10 12"><path d="M0 9h10v2H0z" fill="#fff" /></svg>
              <svg width="11" height="11" viewBox="0 0 11 11" fill="none" stroke="#fff" strokeWidth="1.700"><path d="M4 1h6v6H4zM1 3v7h7" /></svg>
              <X s={10} w={2.600} />
            </WindowButtons>
          </TabStrip>
          <ToolbarTop>
            <ToolbarRow>
              <NavButton><MdArrowBack size={18} /></NavButton>
              <NavButton $off><MdArrowForward size={18} /></NavButton>
              <NavButton><MdRefresh size={18} /></NavButton>
              <UrlBar>
                <TuneButton><TuneIcon /></TuneButton>
                <ChromeText $ls={-0.48} $color="#fff">eu-central-1.console.aws.amazon.com</ChromeText>
                <ChromeText $ls={-0.285} $color="#9a9a9a">/sns/v3/home?region=eu-central-1#/subscription/arn:aws:sns:eu-central-1:260586643565:Stepan_Gasparyan_SNS:b0d6d9a4-66dd-4103-936d-f1b6721c50d1</ChromeText>
                <Push><MdStarBorder size={18} color="#ddd" /></Push>
              </UrlBar>
              <Gap $w={18} /><MdSell size={15} color="#1a73e8" />
              <Gap $w={21} /><MdOutlineExtension size={18} />
              <Gap $w={16} /><BarRule />
              <Gap $w={16} /><MdQueueMusic size={20} />
              <Gap $w={16} /><PythonBadge />
              <Relaunch><ChromeText $ls={0.05}>Relaunch to update</ChromeText><Gap $w={4} /><MdMoreVert size={18} /></Relaunch>
            </ToolbarRow>
          </ToolbarTop>
          <BookmarkBar>
            <Bookmark><FaFacebook size={16} color="#0866ff" /></Bookmark>
            <Bookmark><VkIcon /></Bookmark>
            <Bookmark><GoogleDot /></Bookmark>
            <Bookmark><YtIcon /></Bookmark>
            <Bookmark><BsMicrosoftTeams size={15} color="#6a74d8" /><ChromeText $ls={0.35}>TEAMS</ChromeText></Bookmark>
            <Bookmark><BookIcon /><ChromeText $ls={0.1}>EPAM-learning</ChromeText></Bookmark>
            <Bookmark><CalIcon /><ChromeText $ls={-0.05}>Google Calendar</ChromeText></Bookmark>
            <Push />
            <BarRule /><Gap $w={15} /><MdFolderOpen size={18} color="#ccc" /><Gap $w={6} /><ChromeText $ls={0.05}>All Bookmarks</ChromeText>
          </BookmarkBar>
          <Page>
            <PageMain>
              <AwsHeader>
                <AwsLogo /><HeaderRule $m="0 17px 0 14px" /><GridIcon /><Gap $w={8} /><Text $ls={-0.06}>Services</Text>
                <SearchBox><SearchIcon /><Gap $w={9} /><Text as="i" $ls={-0.1}>Search</Text><Push /><Text $ls={0.2}>[Alt+S]</Text></SearchBox>
                <Push />
                <HeaderIcon><CloudShellIcon /></HeaderIcon><HeaderRule />
                <HeaderIcon><BellIcon /></HeaderIcon><HeaderRule />
                <HeaderIcon><HelpIcon /></HeaderIcon><HeaderRule />
                <HeaderIcon><GearIcon /></HeaderIcon><HeaderRule />
                <HeaderMenu $w={100} $pl={16}><Text>Frankfurt</Text><Caret /></HeaderMenu><HeaderRule />
                <HeaderMenu $w={89} $pl={17}><Text $ls={-0.2}>Stepan</Text><Caret /></HeaderMenu>
              </AwsHeader>
              <PageBody>
                <SideNav>
                  <SideHead><Text $bold $size={17.600} $ls={-0.25}>Amazon SNS</Text><X w={1.800} c="#545b64" /></SideHead>
                  <SideList $pad="16px 0 0 32px">
                    <li><Text $ls={-0.25}>Dashboard</Text></li>
                    <li><Text $ls={-0.1}>Topics</Text></li>
                    <li><Link $bold $ls={-0.22}>Subscriptions</Link></li>
                  </SideList>
                  <SideGroup><Caret $s={5} $h={8} />Mobile</SideGroup>
                  <SideList $pad="0 0 0 32px">
                    <li><Text $ls={0}>Push notifications</Text></li>
                    <li><Text $ls={0.05}>Text messaging (SMS)</Text></li>
                    <li><Text $ls={-0.02}>Origination numbers</Text></li>
                  </SideList>
                </SideNav>
                <Content>
                  <InfoFlash>
                    <Slot $t={1}><InfoIcon /></Slot>
                    <Lines $ml={8}>
                      <Text $bold $ls={-0.3}>New Feature</Text>
                      <Inline $gap={4} $h={22}><Text $ls={-0.163}>Amazon SNS now supports in-place message archiving and replay for FIFO topics.</Text><Link $u $ls={-0.25}>Learn more</Link><ExternalIcon /></Inline>
                    </Lines>
                    <Slot $t={4}><X w={1.800} c="#545b64" /></Slot>
                  </InfoFlash>
                  <SuccessFlash>
                    <Slot $t={3}><CheckIcon /></Slot>
                    <Lines $ml={8}>
                      <Text $bold $ls={-0.37}>Subscription to Stepan_Gasparyan_SNS created successfully.</Text>
                      <Text $ls={0.005}><Text $ls={-0.155}>The ARN of the subscription is </Text>arn:aws:sns:eu-central-1:260586643565:Stepan_Gasparyan_SNS:b0d6d9a4-66dd-4103-936d-f1b6721c50d1.</Text>
                    </Lines>
                    <Slot $t={4}><X w={1.800} c="#d5e8d0" /></Slot>
                  </SuccessFlash>
                  <Breadcrumbs>
                    <Link $u $ls={-0.11}>Amazon SNS</Link><Chevron /><Link $u $ls={-0.25}>Topics</Link><Chevron /><Link $u $ls={-0.085}>Stepan_Gasparyan_SNS</Link><Chevron /><Text $bold $ls={0.12}><Text $ls={-0.28}>Subscription: </Text>b0d6d9a4-66dd-4103-936d-f1b6721c50d1</Text>
                  </Breadcrumbs>
                  <TitleRow>
                    <Text $size={28} $ls={0.32}><Text $ls={-0.38}>Subscription: </Text>b0d6d9a4-66dd-4103-936d-f1b6721c50d1</Text>
                    <ButtonRow><Button $w={69}><Text>Edit</Text></Button><Button $w={86}><Text>Delete</Text></Button></ButtonRow>
                  </TitleRow>
                  <Card $m="23px 39px 0">
                    <CardHead $h={64}><Text $bold $size={17.400} $ls={-0.3}>Details</Text></CardHead>
                    <Columns>
                      <Column>
                        <Fields items={[
                          ["ARN", <Text key="a" $ls={-0.012}>arn:aws:sns:eu-central-1:260586643565:Stepan_Gasparyan_SNS:b0d6d9a4-66dd-4103-936d-<br />f1b6721c50d1</Text>],
                          ["Endpoint", <Text key="b" $ls={-0.18}>stepan_gasparyan@epam.com</Text>],
                          ["Topic", <Link key="c" $ls={-0.11}>Stepan_Gasparyan_SNS</Link>],
                          ["Subscription Principal", <Text key="d" $ls={-0.09}>arn:aws:iam::260586643565:role/students-role</Text>],
                        ]} />
                      </Column>
                      <Column $divider>
                        <Fields items={[
                          ["Status", <Inline key="a" $gap={4}><ClockIcon /><Text $ls={-0.15} $color="#687078">Pending confirmation</Text></Inline>],
                          ["Protocol", <Text key="b" $ls={-0.15}>EMAIL</Text>],
                        ]} />
                      </Column>
                    </Columns>
                  </Card>
                  <Tabs>
                    <TabLink $on><Text $ls={-0.3}>Subscription filter policy</Text></TabLink>
                    <TabDivider />
                    <TabLink><Text $ls={-0.35}>Redrive policy (dead-letter queue)</Text></TabLink>
                  </Tabs>
                  <Card $m="16px 39px 0">
                    <CardHead $h={82}>
                      <Inline $gap={8} $align="baseline" $h={25}><Text $bold $size={17.400} $ls={-0.1}>Subscription filter policy</Text><Link $bold $size={12} $ls={-0.2}>Info</Link></Inline>
                      <Desc>This policy filters the messages that a subscriber receives.</Desc>
                    </CardHead>
                    <EmptyRow><Text $bold $ls={-0.359}>No filter policy configured for this subscription.</Text></EmptyRow>
                  </Card>
                </Content>
                <HelpRail>
                  <RailItem $h={41} $line><InfoIcon s={16} w={1.600} c="#545b64" /></RailItem>
                  <RailItem $h={40}><HexIcon /></RailItem>
                </HelpRail>
              </PageBody>
              <Footer>
                <Inline><CloudShellIcon /><Gap $w={5} /><Text $ls={-0.1}>CloudShell</Text><Gap $w={26} /><Text $ls={-0.259}>Feedback</Text></Inline>
                <Inline><Text $ls={-0.11}>© 2024, Amazon Web Services, Inc. or its affiliates.</Text><Gap $w={30} /><Text $ls={-0.150}>Privacy</Text><Gap $w={25} /><Text $ls={-0.1}>Terms</Text><Gap $w={24} /><Text $ls={-0.286}>Cookie preferences</Text></Inline>
              </Footer>
            </PageMain>
            <Scrollbar><Caret $up $c="#a3a3a3" $h={4} /><Thumb /><Caret $c="#505050" $h={4} /></Scrollbar>
          </Page>
        </Browser>
      </Workspace>
    </Desktop>
  );
}
